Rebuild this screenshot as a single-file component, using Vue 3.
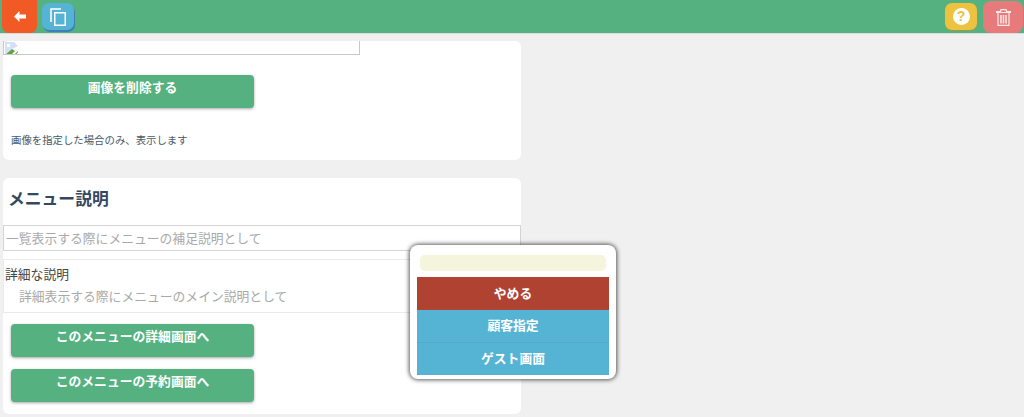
<template>
  <div class="page">
    <header class="topbar">
      <div class="bar-left">
        <button class="back-btn" type="button">
          <svg width="12" height="11" viewBox="0 0 12 11">
            <path d="M0 5.5 L5.5 0 V3.5 H12 V7.5 H5.5 V11 Z" fill="#fff" />
          </svg>
        </button>
        <button class="tool-btn copy-btn" type="button">
          <svg width="16" height="18" viewBox="0 0 16 18" fill="none" stroke="#fff" stroke-width="1.5">
            <path d="M1 14 V1 H11" />
            <rect x="4.75" y="4.75" width="10.5" height="12.5" />
          </svg>
        </button>
      </div>
      <div class="bar-right">
        <button class="tool-btn help-btn" type="button">
          <span class="help-mark">?</span>
        </button>
        <button class="trash-btn" type="button">
          <svg width="15" height="17" viewBox="0 0 15 17" fill="none" stroke="#fde9e9" stroke-width="1.2">
            <path d="M0.5 3.5 H14.5 V2.5 H10.5 L10 0.6 H5 L4.5 2.5 H0.5 Z" />
            <path d="M2 4 V16.4 H13 V4" />
            <path d="M5 6 V14.5 M7.5 6 V14.5 M10 6 V14.5" stroke-width="1.5" />
          </svg>
        </button>
      </div>
    </header>

    <main class="content">
      <section class="card image-card">
        <div class="broken-img">
          <svg width="15" height="14" viewBox="0 0 15 14">
            <path d="M1 0 H10 L14 4 L8 7 L1 13 Z" fill="#d5dff5" />
            <path d="M3 2 h3 v3 h-3 Z" fill="#fff" />
            <path d="M1 13 L8 7 L11 9 L7 13 Z" fill="#5fa344" />
            <path d="M10 13 L14 9 V10 L12 13 Z" fill="#5fa344" />
          </svg>
        </div>
        <button class="green-btn first-btn" type="button">画像を削除する</button>
        <p class="caption">画像を指定した場合のみ、表示します</p>
      </section>

      <section class="card desc-card">
        <h2 class="title">メニュー説明</h2>
        <div class="short-input">一覧表示する際にメニューの補足説明として</div>
        <div class="long-input">
          <div class="long-label">詳細な説明</div>
          <div class="long-hint">詳細表示する際にメニューのメイン説明として</div>
        </div>
        <button v-for="label in links" :key="label" class="green-btn link-btn" type="button">{{ label }}</button>
      </section>
    </main>

    <aside class="popup">
      <div class="popup-field"></div>
      <button class="popup-btn cancel" type="button">やめる</button>
      <button class="popup-btn" type="button">顧客指定</button>
      <button class="popup-btn last" type="button">ゲスト画面</button>
    </aside>
  </div>
</template>

<script setup>
const links = ['このメニューの詳細画面へ', 'このメニューの予約画面へ']
</script>

<style>
html,
body {
  margin: 0;
  background: #f0f0f0;
}
</style>

<style scoped>
.page {
  position: relative;
  height: 417px;
  overflow: hidden;
  background: #f0f0f0;
  font-family: "Noto Sans CJK JP", "Noto Sans", sans-serif;
  font-size: 12.8px;
  color: #34495e;
}

button {
  font-family: inherit;
  border: none;
  padding: 0;
}

.topbar {
  height: 33px;
  background: #55b280;
  display: flex;
  justify-content: space-between;
  box-shadow: 0 1px 0 #dcdcdc;
}

.bar-left {
  display: flex;
  align-items: flex-start;
  padding-left: 2px;
}

.bar-right {
  display: flex;
  align-items: flex-start;
}

.back-btn {
  width: 35px;
  height: 33px;
  background: #f15a24;
  border-radius: 0 0 7px 7px;
  display: flex;
  align-items: center;
  justify-content: center;
}

.tool-btn {
  width: 32px;
  height: 27px;
  margin-top: 3px;
  border-radius: 7px;
  display: flex;
  align-items: center;
  justify-content: center;
}

.copy-btn {
  margin-left: 5px;
  background: #55b4d4;
  box-shadow: 1px 2px 0 #3f7fb5;
}

.help-btn {
  background: #edc23e;
  box-shadow: 0 1px 1px #9a9a50;
  margin-right: 6px;
}

.help-mark {
  width: 17px;
  height: 17px;
  border-radius: 50%;
  background: #fff;
  color: #edc23e;
  font: bold 14px/17px "Liberation Sans", sans-serif;
  text-align: center;
}

.trash-btn {
  width: 40px;
  height: 32px;
  margin: 1px 1px 0 0;
  background: #e77b7b;
  border-radius: 8px;
  display: flex;
  align-items: center;
  justify-content: center;
}

.content {
  width: 518px;
  margin-left: 3px;
  padding-top: 8px;
  display: flex;
  flex-direction: column;
  gap: 18px;
}

.card {
  background: #fff;
  border-radius: 6px;
}

.image-card {
  height: 119px;
}

.broken-img {
  width: 355px;
  height: 13px;
  border: 1px solid #c8c8c8;
  border-top: none;
  overflow: hidden;
}

.green-btn {
  display: block;
  width: 243px;
  height: 33px;
  margin-left: 8px;
  background: #55b280;
  color: #fff;
  font-size: 12.8px;
  font-weight: 700;
  line-height: 23px;
  padding-bottom: 10px;
  border-radius: 4px;
  box-shadow: 0 1px 3px rgba(0, 0, 0, 0.35);
}

.first-btn {
  margin-top: 20px;
}

.caption {
  margin: 25px 0 0 8px;
  font-size: 10.4px;
  line-height: 14px;
  color: #48586a;
}

.desc-card {
  height: 236px;
}

.title {
  margin: 0;
  padding: 8px 0 0 5px;
  font-size: 16.8px;
  line-height: 24px;
  font-weight: 700;
}

.short-input {
  margin-top: 15px;
  height: 26px;
  box-sizing: border-box;
  border: 1px solid #d4d4d4;
  padding-left: 2px;
  line-height: 24px;
  color: #a9a9a9;
}

.long-input {
  margin-top: 8px;
  height: 54px;
  box-sizing: border-box;
  border: 1px solid #eaeaea;
  padding-left: 1px;
}

.long-label {
  line-height: 18px;
  margin-top: 5px;
  color: #444;
}

.long-hint {
  padding-left: 14px;
  line-height: 26px;
  color: #a9a9a9;
}

.link-btn {
  margin-top: 11px;
}

.link-btn + .link-btn {
  margin-top: 12px;
}

.popup {
  position: absolute;
  left: 410px;
  top: 245px;
  width: 206px;
  height: 134px;
  box-sizing: border-box;
  padding: 10px 7px 0;
  background: #fff;
  border-radius: 8px;
  box-shadow: 0 0 4px 1px rgba(0, 0, 0, 0.65);
}

.popup-field {
  height: 16px;
  margin: 0 3px 6px;
  background: #f5f4dc;
  border-radius: 5px;
}

.popup-btn {
  display: block;
  width: 100%;
  height: 32px;
  line-height: 30px;
  padding-bottom: 2px;
  background: #55b4d4;
  color: #fff;
  font-size: 12.8px;
  font-weight: 700;
}

.popup-btn.cancel {
  height: 33px;
  background: #b04232;
}

.popup-btn.last {
  height: 33px;
  box-shadow: inset 0 1px 0 #50aac9;
}
</style>
